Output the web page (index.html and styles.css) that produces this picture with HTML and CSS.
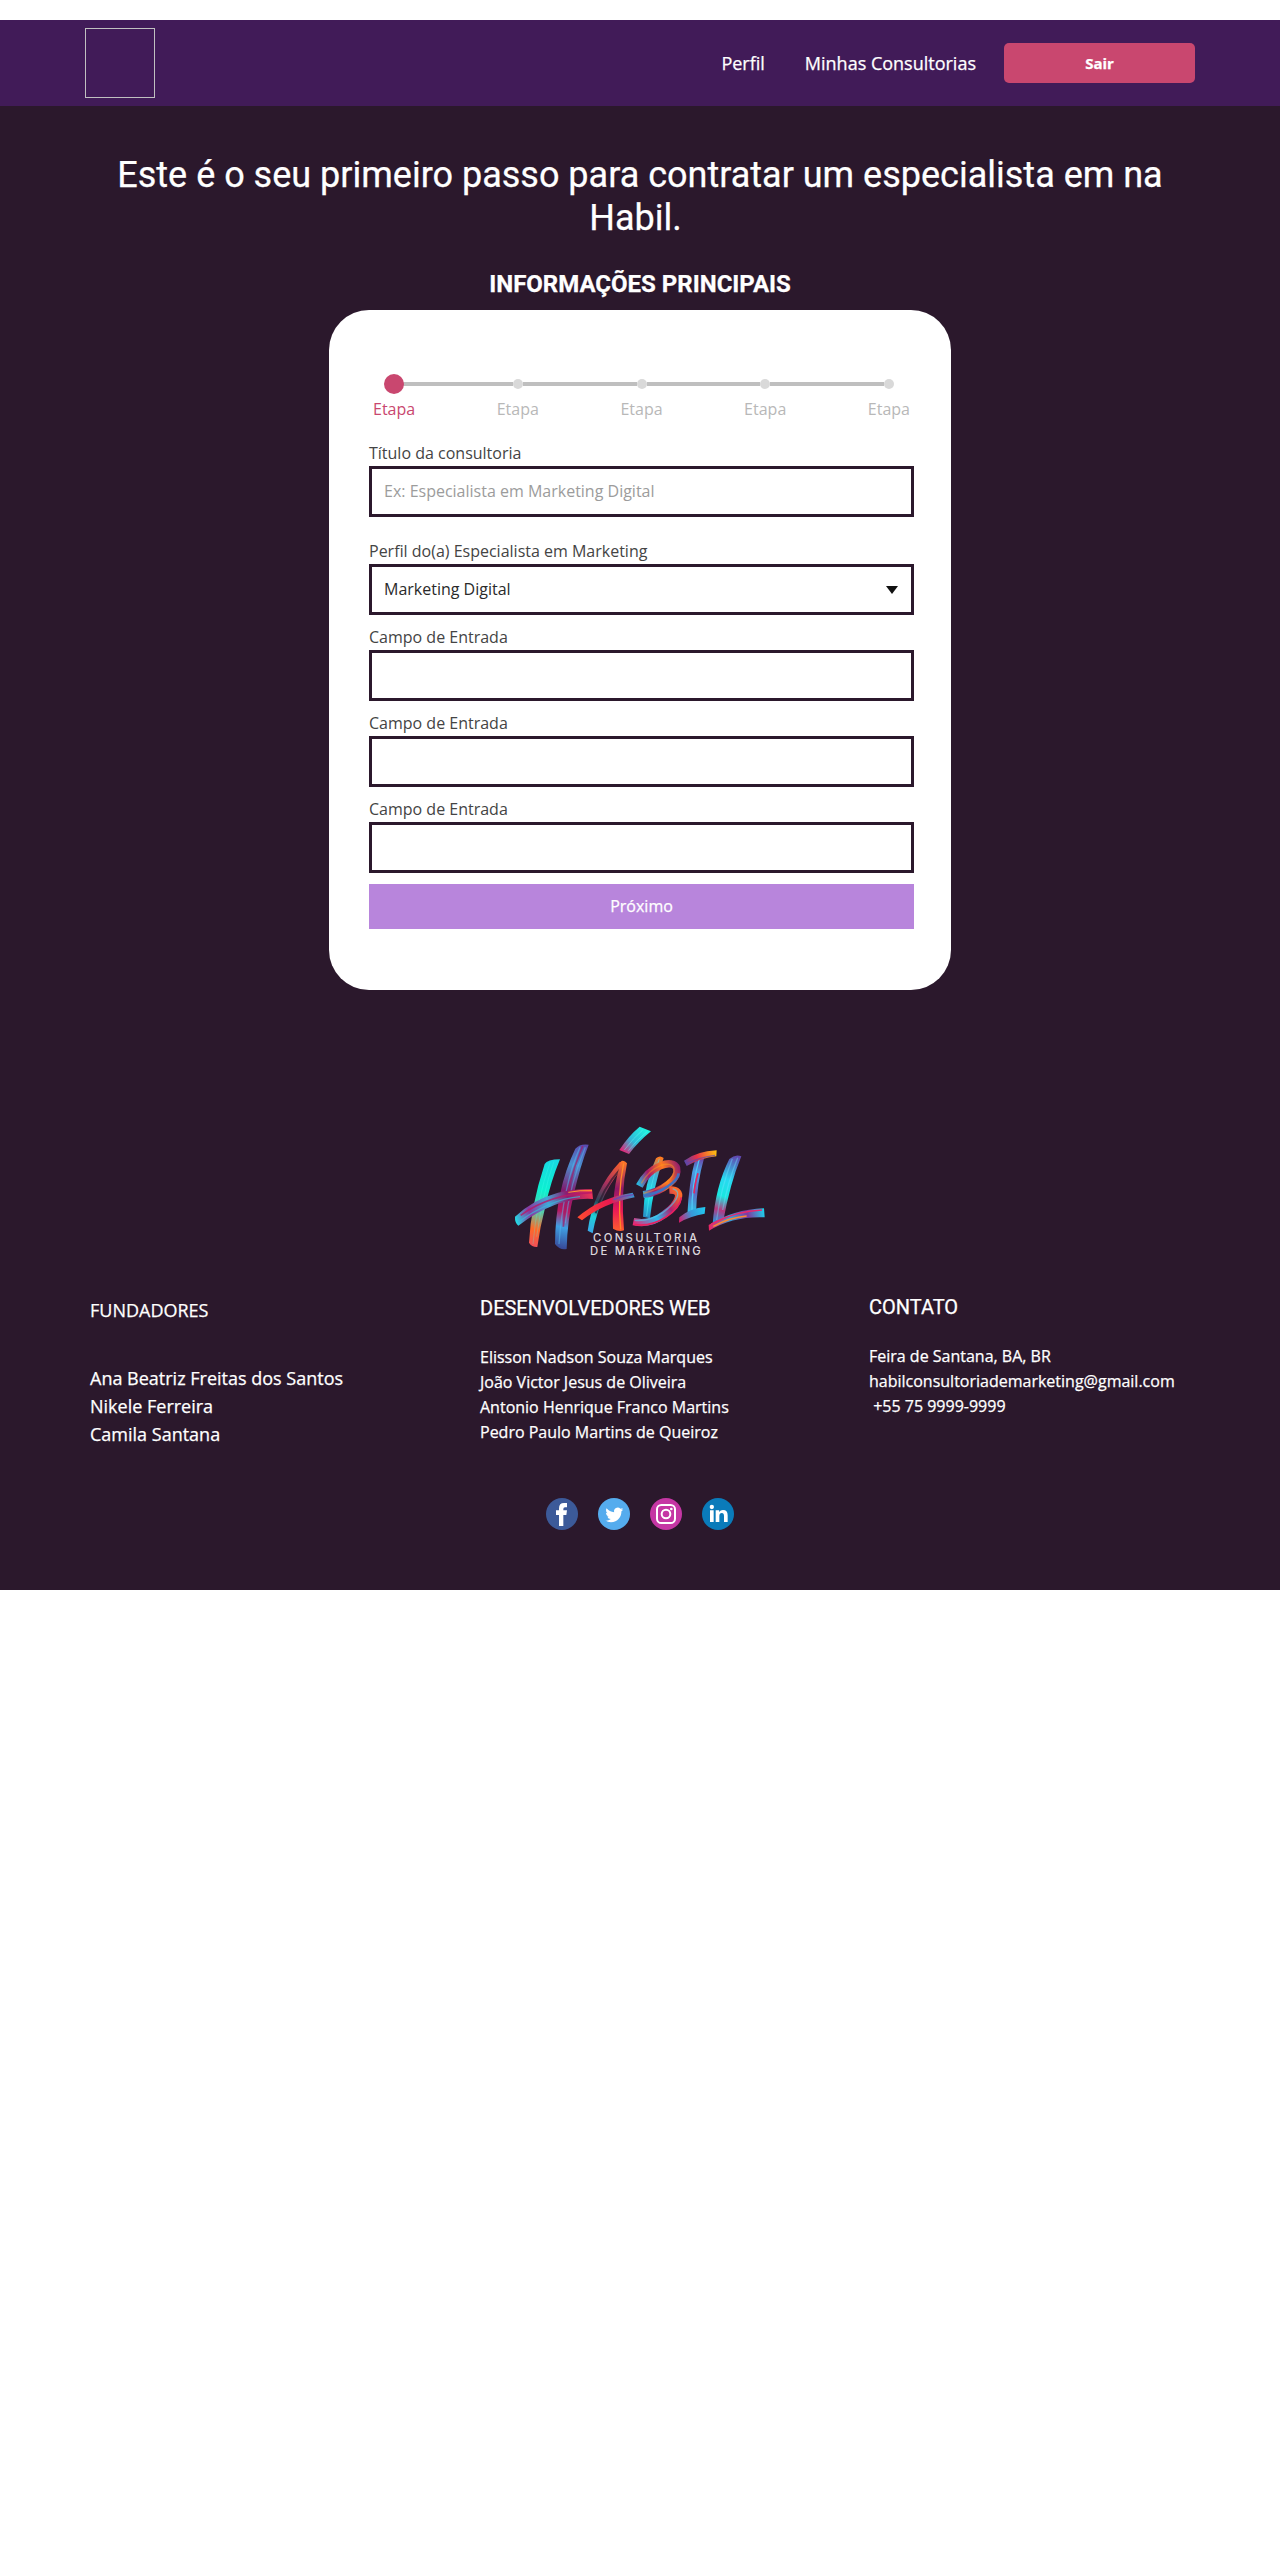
FILE: index.html
```
<!DOCTYPE html>
<html lang="pt-BR">
<head>
<meta charset="utf-8">
<title>Habil - Consultoria de Marketing</title>
<link rel="stylesheet" href="styles.css">
</head>
<body>
<header class="topbar">
  <div class="container topbar-inner">
    <div class="brand"></div>
    <nav class="nav">
      <a class="nav-link">Perfil</a>
      <a class="nav-link">Minhas Consultorias</a>
      <button class="btn-exit" type="button">Sair</button>
    </nav>
  </div>
</header>

<main class="main">
  <h1 class="title">Este é o seu primeiro passo para contratar um especialista em na Habil.&nbsp;</h1>
  <h2 class="subtitle">INFORMAÇÕES PRINCIPAIS</h2>
  <form class="card">
    <div class="track">
      <span class="dot dot-active"></span><span class="seg"></span>
      <span class="dot"></span><span class="seg"></span>
      <span class="dot"></span><span class="seg"></span>
      <span class="dot"></span><span class="seg"></span>
      <span class="dot"></span>
    </div>
    <div class="steps">
      <span class="step step-active">Etapa</span>
      <span class="step">Etapa</span>
      <span class="step">Etapa</span>
      <span class="step">Etapa</span>
      <span class="step">Etapa</span>
    </div>
    <label class="field field-wide">
      <span class="label">Título da consultoria</span>
      <span class="input placeholder">Ex: Especialista em Marketing Digital</span>
    </label>
    <label class="field">
      <span class="label">Perfil do(a) Especialista em Marketing</span>
      <span class="input select">Marketing Digital
        <svg class="caret" width="12" height="8" viewBox="0 0 12 8"><path d="M0 0H12L6 8Z" fill="#111"/></svg>
      </span>
    </label>
    <label class="field"><span class="label">Campo de Entrada</span><span class="input"></span></label>
    <label class="field"><span class="label">Campo de Entrada</span><span class="input"></span></label>
    <label class="field"><span class="label">Campo de Entrada</span><span class="input"></span></label>
    <button class="btn-next" type="button">Próximo</button>
  </form>
</main>

<footer class="footer">
  <svg class="logo" width="280" height="160" viewBox="0 0 840 480" fill="none">
    <defs>
      <linearGradient id="h1" gradientUnits="userSpaceOnUse" x1="155" y1="150" x2="100" y2="410"><stop offset="0" stop-color="#18d8e4"/><stop offset=".35" stop-color="#0cf0d0"/><stop offset=".6" stop-color="#58c8a8"/><stop offset=".8" stop-color="#ff6a28"/><stop offset="1" stop-color="#f05058"/></linearGradient>
      <linearGradient id="h2" gradientUnits="userSpaceOnUse" x1="245" y1="105" x2="180" y2="415"><stop offset="0" stop-color="#5a4cb0"/><stop offset=".2" stop-color="#4a90d0"/><stop offset=".45" stop-color="#801c70"/><stop offset=".65" stop-color="#b81860"/><stop offset=".8" stop-color="#3fa0e4"/><stop offset="1" stop-color="#384898"/></linearGradient>
      <linearGradient id="h3" gradientUnits="userSpaceOnUse" x1="45" y1="330" x2="278" y2="250"><stop offset="0" stop-color="#20e0e8"/><stop offset=".2" stop-color="#8838a0"/><stop offset=".45" stop-color="#40a8d8"/><stop offset=".7" stop-color="#8c1c70"/><stop offset="1" stop-color="#f03458"/></linearGradient>
      <linearGradient id="ac" gradientUnits="userSpaceOnUse" x1="435" y1="58" x2="370" y2="125"><stop offset="0" stop-color="#20f0e0"/><stop offset=".55" stop-color="#30b8d8"/><stop offset="1" stop-color="#e02878"/></linearGradient>
      <linearGradient id="a1" gradientUnits="userSpaceOnUse" x1="370" y1="155" x2="270" y2="365"><stop offset="0" stop-color="#ff6428"/><stop offset=".35" stop-color="#a83060"/><stop offset=".6" stop-color="#284858"/><stop offset=".8" stop-color="#20d0d8"/><stop offset="1" stop-color="#38a8e8"/></linearGradient>
      <linearGradient id="a2" gradientUnits="userSpaceOnUse" x1="370" y1="155" x2="355" y2="360"><stop offset="0" stop-color="#ff7828"/><stop offset=".4" stop-color="#901868"/><stop offset=".7" stop-color="#e81858"/><stop offset="1" stop-color="#ff5a30"/></linearGradient>
      <linearGradient id="a3" gradientUnits="userSpaceOnUse" x1="235" y1="325" x2="403" y2="255"><stop offset="0" stop-color="#ff4a30"/><stop offset=".6" stop-color="#e81850"/><stop offset="1" stop-color="#3098d8"/></linearGradient>
      <linearGradient id="b1" gradientUnits="userSpaceOnUse" x1="480" y1="145" x2="440" y2="320"><stop offset="0" stop-color="#ff7a20"/><stop offset=".3" stop-color="#40b0d8"/><stop offset=".65" stop-color="#18e8e8"/><stop offset="1" stop-color="#2890c8"/></linearGradient>
      <linearGradient id="b2" gradientUnits="userSpaceOnUse" x1="415" y1="225" x2="540" y2="180"><stop offset="0" stop-color="#28b8e0"/><stop offset=".3" stop-color="#a81868"/><stop offset=".65" stop-color="#ff7a20"/><stop offset="1" stop-color="#982068"/></linearGradient>
      <linearGradient id="b3" gradientUnits="userSpaceOnUse" x1="530" y1="240" x2="400" y2="345"><stop offset="0" stop-color="#ff6a28"/><stop offset=".3" stop-color="#b02070"/><stop offset=".6" stop-color="#2cb8ec"/><stop offset="1" stop-color="#f02070"/></linearGradient>
      <linearGradient id="i1" gradientUnits="userSpaceOnUse" x1="600" y1="140" x2="575" y2="320"><stop offset="0" stop-color="#7038a0"/><stop offset=".25" stop-color="#48a0e4"/><stop offset=".6" stop-color="#6068c0"/><stop offset="1" stop-color="#20d8f0"/></linearGradient>
      <linearGradient id="i2" gradientUnits="userSpaceOnUse" x1="552" y1="155" x2="650" y2="130"><stop offset="0" stop-color="#5048b0"/><stop offset=".4" stop-color="#e83048"/><stop offset="1" stop-color="#ffc010"/></linearGradient>
      <linearGradient id="i3" gradientUnits="userSpaceOnUse" x1="535" y1="330" x2="616" y2="300"><stop offset="0" stop-color="#e01868"/><stop offset=".5" stop-color="#3898d8"/><stop offset="1" stop-color="#20c8f0"/></linearGradient>
      <linearGradient id="l1" gradientUnits="userSpaceOnUse" x1="710" y1="140" x2="650" y2="340"><stop offset="0" stop-color="#6048b0"/><stop offset=".35" stop-color="#28d8f0"/><stop offset=".6" stop-color="#18e8e0"/><stop offset=".8" stop-color="#b83880"/><stop offset="1" stop-color="#2098e0"/></linearGradient>
      <linearGradient id="l2" gradientUnits="userSpaceOnUse" x1="625" y1="350" x2="795" y2="305"><stop offset="0" stop-color="#f02060"/><stop offset=".4" stop-color="#38a0d8"/><stop offset=".7" stop-color="#8038a0"/><stop offset="1" stop-color="#18d8f0"/></linearGradient>
    </defs>
    <!-- H -->
    <path d="M134 162Q142 148 180 148Q152 215 136 290Q120 350 112 411Q96 412 87 398Q92 290 134 162Z" fill="url(#h1)"/>
    <path d="M150 158Q110 270 99 402M162 154Q128 250 110 380" stroke="#50fff0" stroke-opacity=".25" stroke-width="3"/>
    <path d="M226 116Q240 100 266 104Q240 170 222 250Q202 330 200 417Q180 422 165 402Q166 240 226 116Z" fill="url(#h2)"/>
    <path d="M240 112Q190 225 177 402M256 112Q210 220 196 340" stroke="#58b8f0" stroke-opacity=".5" stroke-width="4"/>
    <path d="M248 108Q196 230 190 350" stroke="#a01c68" stroke-opacity=".7" stroke-width="5"/>
    <path d="M45 320Q100 268 174 248Q222 235 276 238L279 267Q170 260 55 347Q44 338 45 320Z" fill="url(#h3)"/>
    <path d="M62 316Q150 252 276 248" stroke="#b81868" stroke-opacity=".8" stroke-width="5"/>
    <path d="M54 337Q150 268 240 260" stroke="#38b8dc" stroke-opacity=".7" stroke-width="4"/>
    <path d="M205 247Q240 240 276 242" stroke="#ff9830" stroke-width="3"/>
    <!-- Á -->
    <path d="M419 50L453 64Q415 95 387 132L358 120Q385 78 419 50Z" fill="url(#ac)"/>
    <path d="M428 60Q400 84 373 120M440 66Q412 88 385 122" stroke="#68f8f8" stroke-opacity=".45" stroke-width="3"/>
    <path d="M360 155L380 160Q300 245 278 370L263 362Q280 240 360 155Z" fill="url(#a1)"/>
    <path d="M360 178Q304 240 287 310" stroke="#2b182c" stroke-opacity=".7" stroke-width="6"/>
    <path d="M364 153Q374 150 381 160Q362 250 372 361Q356 366 339 356Q334 240 364 153Z" fill="url(#a2)"/>
    <path d="M371 160Q352 250 362 358" stroke="#ff8a28" stroke-width="4"/>
    <path d="M232 322Q300 262 398 248L404 262Q310 280 246 331Z" fill="url(#a3)"/>
    <path d="M340 269Q370 257 400 254" stroke="#7048b0" stroke-width="4"/>
    <!-- B -->
    <path d="M468 145Q480 134 491 144Q460 230 450 325L429 320Q432 220 468 145Z" fill="url(#b1)"/>
    <path d="M478 146Q448 230 440 318" stroke="#58f0f8" stroke-opacity=".5" stroke-width="3"/>
    <path d="M418 228C450 165 520 145 530 175C538 205 490 245 430 254" stroke="url(#b2)" stroke-width="22"/>
    <path d="M424 220C456 165 512 149 522 175C528 203 484 238 430 250" stroke="#ffa018" stroke-opacity=".45" stroke-width="4"/>
    <path d="M536 190C534 212 490 248 430 258" stroke="#4070c0" stroke-width="8"/>
    <path d="M508 240C556 238 536 282 494 312Q452 346 400 335" stroke="url(#b3)" stroke-width="22"/>
    <path d="M518 236C552 246 524 282 488 308Q448 335 404 331" stroke="#4bd0f0" stroke-opacity=".6" stroke-width="4"/>
    <path d="M544 262C540 300 472 354 404 344" stroke="#e82060" stroke-width="5"/>
    <!-- I -->
    <path d="M586 146L613 142Q590 220 588 312L562 316Q566 220 586 146Z" fill="url(#i1)"/>
    <path d="M598 146Q574 230 576 310" stroke="#50c8f8" stroke-width="4"/>
    <path d="M594 190Q584 225 582 250" stroke="#e02860" stroke-width="5"/>
    <path d="M552 152Q590 124 650 121L649 139Q600 145 560 168Z" fill="url(#i2)"/>
    <path d="M560 161Q600 141 645 136" stroke="#6048b0" stroke-opacity=".7" stroke-width="4"/>
    <path d="M538 322Q570 294 616 291L614 311Q570 318 537 338Z" fill="url(#i3)"/>
    <!-- L -->
    <path d="M688 147Q706 131 724 139Q690 220 669 337L638 342Q646 230 688 147Z" fill="url(#l1)"/>
    <path d="M697 146Q662 235 650 330M713 143Q682 220 668 300" stroke="#6fe4ff" stroke-opacity=".4" stroke-width="4"/>
    <path d="M626 345Q700 298 792 295L794 322Q700 318 627 362Z" fill="url(#l2)"/>
    <path d="M634 343Q710 302 786 300" stroke="#e82870" stroke-width="5"/>
    <path d="M640 349Q690 322 740 318" stroke="#ff8a30" stroke-width="4"/>
    <text class="logo-text" x="279" y="396" textLength="312">CONSULTORIA</text>
    <text class="logo-text" x="270" y="434" textLength="332">DE MARKETING</text>
  </svg>

  <div class="columns">
    <section class="col col-founders">
      <p>FUNDADORES</p>
      <ul class="list">
        <li>Ana Beatriz Freitas dos Santos</li>
        <li>Nikele Ferreira</li>
        <li>Camila Santana</li>
      </ul>
    </section>
    <section class="col col-devs">
      <h3>DESENVOLVEDORES WEB</h3>
      <ul class="list">
        <li>Elisson Nadson Souza Marques</li>
        <li>João Victor Jesus de Oliveira</li>
        <li>Antonio Henrique Franco Martins</li>
        <li>Pedro Paulo Martins de Queiroz</li>
      </ul>
    </section>
    <section class="col col-contact">
      <h3>CONTATO</h3>
      <ul class="list">
        <li>Feira de Santana, BA, BR</li>
        <li>habilconsultoriademarketing@gmail.com</li>
        <li>&nbsp;+55 75 9999-9999</li>
      </ul>
    </section>
  </div>

  <div class="social">
    <svg width="32" height="32" viewBox="0 0 96 96"><circle cx="48" cy="48" r="48" fill="#3c5a99"/><path d="M39 84V51H30V37H39V31Q39 15 54 15H63V28H57Q52 28 52 33V37H63L61 51H52V84Z" fill="#fff"/></svg>
    <svg width="32" height="32" viewBox="0 0 96 96"><circle cx="48" cy="48" r="48" fill="#55acee"/><path transform="translate(22 24) scale(2.24)" d="M23.95 4.57a10 10 0 0 1-2.82.78 4.96 4.96 0 0 0 2.16-2.72c-.95.55-2 .96-3.13 1.18a4.92 4.92 0 0 0-8.38 4.48C7.69 8.1 4.07 6.13 1.64 3.16a4.82 4.82 0 0 0-.67 2.48c0 1.71.87 3.21 2.19 4.1a4.9 4.9 0 0 1-2.23-.62v.06a4.92 4.92 0 0 0 3.95 4.83 5 5 0 0 1-2.21.08 4.94 4.94 0 0 0 4.6 3.42A9.87 9.87 0 0 1 0 19.54a14 14 0 0 0 7.55 2.21c9.05 0 14-7.5 14-13.98 0-.21 0-.42-.02-.63a9.94 9.94 0 0 0 2.46-2.55z" fill="#fff"/></svg>
    <svg width="32" height="32" viewBox="0 0 96 96"><circle cx="48" cy="48" r="48" fill="#c536a4"/><g fill="none" stroke="#fff" stroke-width="6"><rect x="21" y="21" width="54" height="54" rx="13"/><circle cx="48" cy="48" r="13"/></g><circle cx="64" cy="33" r="4" fill="#fff"/></svg>
    <svg width="32" height="32" viewBox="0 0 96 96"><circle cx="48" cy="48" r="48" fill="#0a7bba"/><g fill="#fff"><circle cx="29.500" cy="27" r="6.500"/><path d="M24 37H35V72H24ZM41 37H51.500V42Q55 36 63 36Q77 36 77 52V72H66V54Q66 45 59.500 45Q52 45 52 54V72H41Z"/></g></svg>
  </div>
</footer>
</body>
</html>
```

FILE: styles.css
```
* { box-sizing: border-box; }
body {
  margin: 0;
  padding-top: 20px;
  background: #fff;
  color: #fff;
  font: 400 16px/24px "Open Sans", sans-serif;
}
h1, h2, h3, p, ul { margin: 0; padding: 0; }
ul { list-style: none; }
button { border: 0; padding: 0; color: #fff; font-family: inherit; }

/* slightly heavier light-on-dark text */
.nav, .title, .subtitle, .columns, .btn-next { -webkit-text-stroke: 0.25px currentColor; }

/* header */
.topbar { background: #411b58; height: 86px; }
.container { width: 1110px; margin: 0 auto; }
.topbar-inner { display: flex; justify-content: space-between; align-items: center; height: 100%; }
.brand { width: 70px; height: 70px; border: 1px solid #c0c0c0; }
.nav { display: flex; align-items: center; font-size: 18px; }
.nav-link { margin-right: 40px; }
.nav-link + .nav-link { margin-right: 28px; }
.btn-exit {
  width: 191px; height: 40px;
  border-radius: 5px;
  background: #c9476f;
  font-size: 15px; font-weight: 700;
}

/* main form */
.main { background: #2b182c; padding: 48px 85px 0; height: 974px; }
.title { font: 400 36px/43px Roboto, sans-serif; text-align: center; }
.subtitle { margin-top: 30px; font: 700 24px/29px Roboto, sans-serif; text-align: center; }
.card {
  width: 622px; height: 680px;
  margin: 11px auto 0;
  padding: 64px 37px 0 40px;
  border-radius: 40px;
  background: #fff;
  color: #444;
}
.track { display: flex; align-items: center; height: 20px; margin: 0 20px 0 15px; }
.dot { position: relative; flex: none; width: 10px; height: 10px; border-radius: 50%; background: #d9d9d9; }
.dot-active { width: 20px; height: 20px; margin-right: -5px; background: #c9476f; }
.seg { flex: 1; height: 4px; background: #bfbfbf; }
.steps { display: flex; justify-content: space-between; margin: 3px 4px 20px 4px; color: #b8b8b8; }
.step-active { color: #c9476f; }
.field { display: block; margin-bottom: 10px; }
.field-wide { margin-bottom: 22px; }
.label { display: block; height: 25px; }
.input {
  display: flex; align-items: center; justify-content: space-between;
  height: 51px;
  padding: 0 13px 1px 12px;
  border: 3px solid #2b182c;
}
.placeholder { color: #9c9c9c; }
.select { color: #2a2a2a; }
.caret { margin-top: 2px; }
.btn-next { display: block; width: 100%; height: 45px; margin-top: 11px; padding-bottom: 2px; background: #b885dc; font-size: 16px; }

/* footer */
.footer { background: #2b182c; height: 510px; padding-top: 30px; }
.logo { display: block; margin: 0 auto; }
.logo-text { font: 500 34px Inter, sans-serif; fill: #dcd6dd; }
.columns { display: grid; grid-template-columns: 390px 389px 1fr; padding-left: 90px; height: 203px; margin-top: 25px; }
.col-founders { padding-top: 1px; font-size: 18px; line-height: 28px; }
.col-founders .list { margin-top: 40px; }
.col h3 { font: 400 20px/24px Roboto, sans-serif; margin-bottom: 25px; }
.col .list li { white-space: nowrap; }
.col-devs, .col-contact { line-height: 25px; }
.col-devs { padding-top: 1px; }
.social { display: flex; justify-content: center; gap: 20px; }
```
